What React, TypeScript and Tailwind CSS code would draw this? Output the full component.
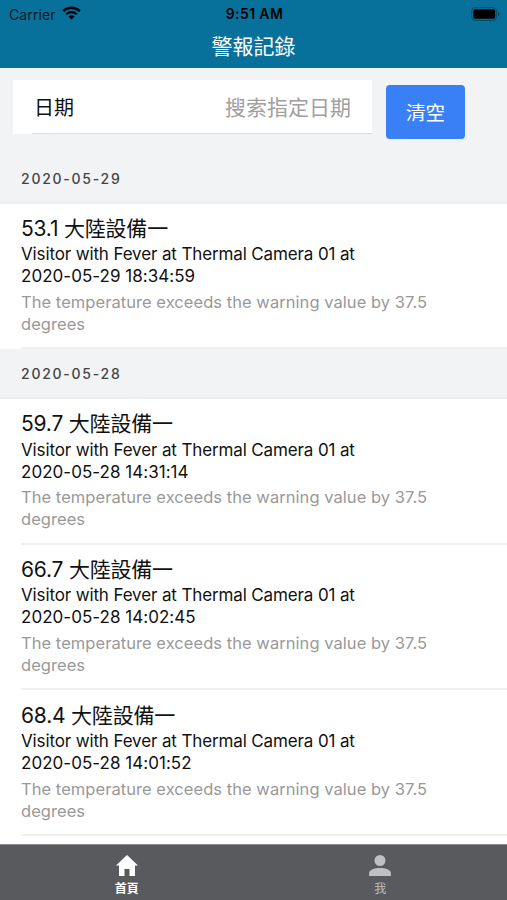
interface AlarmRecord {
  title: string;
  time: string;
}

interface AlarmGroup {
  date: string;
  records: AlarmRecord[];
}

const ALARMS: AlarmGroup[] = [
  {
    date: '2020-05-29',
    records: [{ title: '53.1 大陸設備一', time: '2020-05-29 18:34:59' }],
  },
  {
    date: '2020-05-28',
    records: [
      { title: '59.7 大陸設備一', time: '2020-05-28 14:31:14' },
      { title: '66.7 大陸設備一', time: '2020-05-28 14:02:45' },
      { title: '68.4 大陸設備一', time: '2020-05-28 14:01:52' },
    ],
  },
];

const StatusBar = () => {
  return (
    <div className="grid grid-cols-3 items-center h-[28px] pl-[9px] pr-[7px] text-black">
      <div className="flex items-center">
        <span className="pt-px text-[14px] leading-none tracking-[0.1px] text-black/80">Carrier</span>
        <svg className="ml-[6px] mb-[2px]" width="19" height="14" viewBox="0 0 19 14" fill="none" stroke="currentColor">
          <path d="M1.2 5.1a12 12 0 0 1 16.6 0" strokeWidth="2.5" />
          <path d="M4.2 8.3a7.6 7.6 0 0 1 10.6 0" strokeWidth="2.3" />
          <path d="M9.5 13.6 6.4 10.5a4.4 4.4 0 0 1 6.2 0Z" fill="currentColor" stroke="none" />
        </svg>
      </div>
      <span className="text-center text-[14px] leading-none font-semibold tracking-[0.4px] whitespace-nowrap">9:51 AM</span>
      <svg className="justify-self-end mb-px" width="29" height="14" viewBox="0 0 29 14">
        <rect x="0.6" y="0.6" width="25" height="12.8" rx="3.6" fill="none" stroke="#000" strokeOpacity="0.35" />
        <rect x="2.2" y="2.2" width="22" height="9.6" rx="2.2" fill="#000" />
        <path d="M27 5v4c1-.3 1.5-1.1 1.5-2S28 5.3 27 5Z" fill="#000" fillOpacity="0.4" />
      </svg>
    </div>
  );
};

const AlarmItem = ({ title, time }: AlarmRecord) => {
  return (
    <div className="ml-[21px] h-[145.8px] pt-[11.4px] border-b-2 border-[#f0f0f1]">
      <h2 className="text-[21px] leading-[28px] tracking-[-0.2px] whitespace-nowrap">{title}</h2>
      <p className="mt-[0.5px] text-[17px] leading-[22px] w-[360px] tracking-[-0.13px]">
        Visitor with Fever at Thermal Camera 01 at
        <br />
        <span className="tracking-[0.03px]">{time}</span>
      </p>
      <p className="mt-[3.3px] text-[16.5px] leading-[22px] w-[430px] text-[#999999] tracking-[0.05px]">
        The temperature exceeds the warning value by 37.5
        <br />
        degrees
      </p>
    </div>
  );
};

const App = () => {
  return (
    <div className="flex flex-col w-[507px] h-[900px] overflow-hidden bg-white text-[#111111] font-['Inter','Noto_Sans_CJK_TC',sans-serif]">
      <header className="h-[68px] shrink-0 bg-[#08719b]">
        <StatusBar />
        <h1 className="pt-px text-center text-[21px] leading-[36px] text-white">警報記錄</h1>
      </header>

      <main className="flex-1 min-h-0 overflow-hidden">
        {/* 搜索區塊 */}
        <div className="flex items-start h-[86px] pl-[13px] pt-[12px] bg-[#f1f3f5]">
          <div className="w-[359px] h-[54px] bg-white">
            <div className="flex items-center justify-between h-[54px] ml-[19px] pt-[2px] pl-[2px] pr-[21px] border-b border-[#dcdddf]">
              <span className="text-[20px]">日期</span>
              <span className="text-[21px] text-[#a0a0a0]">搜索指定日期</span>
            </div>
          </div>
          <button className="ml-[14px] mt-[5px] pt-[3px] w-[79px] h-[54px] rounded-[4px] bg-[#397ff5] text-white text-[19.5px]">
            清空
          </button>
        </div>

        {/* 警報列表 */}
        {ALARMS.map((group) => (
          <section key={group.date}>
            <div className="flex items-center h-[49.5px] pt-px pl-[21px] bg-[#f1f3f5] border-b-2 border-[#ebedee] text-[14px] font-medium tracking-[1.75px] text-[#444444]">
              {group.date}
            </div>
            {group.records.map((item) => (
              <AlarmItem key={item.time} title={item.title} time={item.time} />
            ))}
          </section>
        ))}
      </main>

      <nav className="flex shrink-0 h-[56px] bg-[#595a5d] border-t border-[#8b8c8e]">
        <div className="flex flex-1 flex-col items-center pt-[9px] text-white">
          <svg width="24" height="23" viewBox="0 0 24 23" fill="currentColor">
            <path d="M12 1 1 11.5h3V22h5.500v-7h5v7H20V11.5h3Z" />
          </svg>
          <span className="mt-[4px] text-[12px] leading-[16px] font-bold">首頁</span>
        </div>
        <div className="flex flex-1 flex-col items-center pt-[9px] text-[#bfc0c3]">
          <svg width="24" height="23" viewBox="0 0 24 23" fill="currentColor">
            <circle cx="12" cy="6.5" r="5.5" />
            <path d="M1 22v-2.500C1 15.800 6.500 14 12 14s11 1.800 11 5.500V22Z" />
          </svg>
          <span className="mt-[4px] text-[12px] leading-[16px]">我</span>
        </div>
      </nav>
    </div>
  );
};

export default App;
